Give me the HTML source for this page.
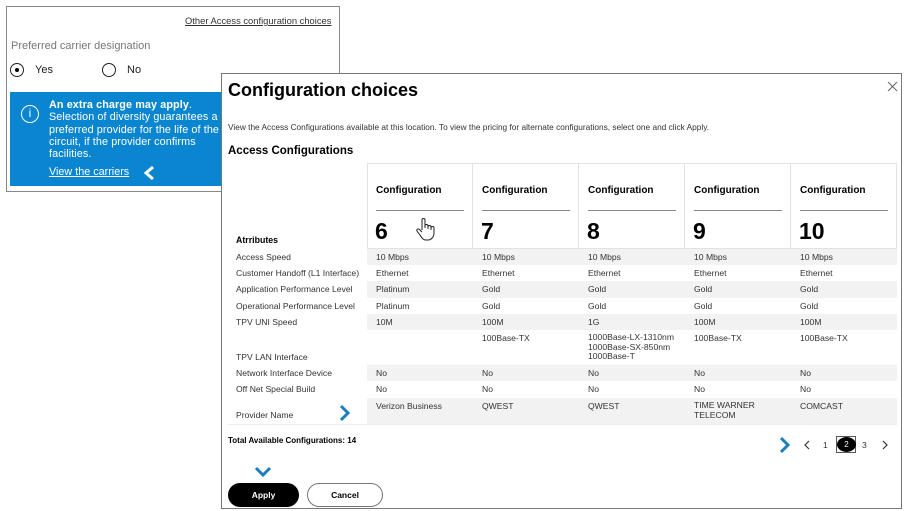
<!DOCTYPE html>
<html><head><meta charset="utf-8"><style>
*{margin:0;padding:0;box-sizing:border-box}
body{width:907px;height:511px;background:#fff;position:relative;overflow:hidden;font-family:"Liberation Sans",Arial,sans-serif;color:#000}
.a{position:absolute;white-space:nowrap}
.t{font-size:8.6px;color:#333}
.bold{font-weight:bold}
</style></head><body>
<div class="a" style="left:6px;top:6px;width:334px;height:186px;border:1px solid #888;background:#fff"></div>
<div class="a" style="left:185px;top:15px;font-size:9.4px;color:#333;text-decoration:underline">Other Access configuration choices</div>
<div class="a" style="left:11px;top:40px;font-size:11px;color:#777">Preferred carrier designation</div>
<div class="a" style="left:10px;top:63px;width:14px;height:14px;border:1.3px solid #222;border-radius:50%"></div>
<div class="a" style="left:15px;top:68px;width:4px;height:4px;background:#000;border-radius:50%"></div>
<div class="a" style="left:35px;top:64px;font-size:11px;color:#222">Yes</div>
<div class="a" style="left:102px;top:63px;width:14px;height:14px;border:1.3px solid #222;border-radius:50%"></div>
<div class="a" style="left:127px;top:64px;font-size:11px;color:#222">No</div>
<div class="a" style="left:10px;top:92px;width:212px;height:94px;background:#0a86d0"></div>
<div class="a" style="left:21px;top:105px;width:18px;height:18px;border:1.5px solid #fff;border-radius:50%;color:#fff;font-size:12px;text-align:center;line-height:15px">i</div>
<div class="a" style="left:49px;top:99px;font-size:10.8px;line-height:12.3px;color:#fff;white-space:normal;width:175px;letter-spacing:0.1px"><b>An extra charge may apply</b>.<br>Selection of diversity guarantees a preferred provider for the life of the circuit, if the provider confirms facilities.</div>
<div class="a" style="left:49px;top:166px;font-size:10.8px;color:#fff;text-decoration:underline">View the carriers</div>
<svg class="a" style="left:142px;top:165px" width="14" height="16"><path d="M11 2 L4 8 L11 14" stroke="#fff" stroke-width="3" fill="none"/></svg>

<div class="a" style="left:221px;top:73px;width:681px;height:436px;border:1px solid #777;background:#fff"></div>
<div class="a bold" style="left:228px;top:80px;font-size:18px">Configuration choices</div>
<svg class="a" style="left:887px;top:81px" width="11" height="11"><path d="M1 1L10 10M10 1L1 10" stroke="#666" stroke-width="1"/></svg>
<div class="a" style="left:228px;top:122px;font-size:8.3px;color:#333">View the Access Configurations available at this location. To view the pricing for alternate configurations, select one and click Apply.</div>
<div class="a bold" style="left:228px;top:145px;font-size:11.5px">Access Configurations</div>

<div class="a" style="left:367px;top:249px;width:530px;height:16px;background:#f2f2f2"></div>
<div class="a" style="left:367px;top:281px;width:530px;height:17px;background:#f2f2f2"></div>
<div class="a" style="left:367px;top:314px;width:530px;height:16px;background:#f2f2f2"></div>
<div class="a" style="left:367px;top:365px;width:530px;height:16px;background:#f2f2f2"></div>
<div class="a" style="left:367px;top:398px;width:530px;height:26px;background:#f2f2f2"></div>
<div class="a" style="left:228px;top:424px;width:669px;height:1px;background:#eee"></div>

<div class="a" style="left:367px;top:163px;width:106px;height:86px;border:1px solid #e2e2e2"></div>
<div class="a" style="left:473px;top:163px;width:106px;height:86px;border:1px solid #e2e2e2;border-left:none"></div>
<div class="a" style="left:579px;top:163px;width:106px;height:86px;border:1px solid #e2e2e2;border-left:none"></div>
<div class="a" style="left:685px;top:163px;width:106px;height:86px;border:1px solid #e2e2e2;border-left:none"></div>
<div class="a" style="left:791px;top:163px;width:106px;height:86px;border:1px solid #e2e2e2;border-left:none"></div>

<div class="a bold" style="left:376px;top:185px;font-size:10px">Configuration</div>
<div class="a bold" style="left:482px;top:185px;font-size:10px">Configuration</div>
<div class="a bold" style="left:588px;top:185px;font-size:10px">Configuration</div>
<div class="a bold" style="left:694px;top:185px;font-size:10px">Configuration</div>
<div class="a bold" style="left:800px;top:185px;font-size:10px">Configuration</div>
<div class="a" style="left:376px;top:210px;width:88px;height:1px;background:#888"></div>
<div class="a" style="left:482px;top:210px;width:88px;height:1px;background:#888"></div>
<div class="a" style="left:588px;top:210px;width:88px;height:1px;background:#888"></div>
<div class="a" style="left:694px;top:210px;width:88px;height:1px;background:#888"></div>
<div class="a" style="left:800px;top:210px;width:88px;height:1px;background:#888"></div>
<div class="a bold" style="left:375px;top:218px;font-size:23px">6</div>
<div class="a bold" style="left:481px;top:218px;font-size:23px">7</div>
<div class="a bold" style="left:587px;top:218px;font-size:23px">8</div>
<div class="a bold" style="left:693px;top:218px;font-size:23px">9</div>
<div class="a bold" style="left:799px;top:218px;font-size:23px">10</div>
<svg class="a" style="left:415px;top:217px" width="20" height="24" viewBox="0 0 20 24"><path d="M7 13V3a1.5 1.5 0 0 1 3 0v8 M10 9a1.5 1.5 0 0 1 3 0v3 M13 10a1.5 1.5 0 0 1 3 0v3 M16 11a1.5 1.5 0 0 1 3 0v5c0 4-3 7-6 7h-2c-3 0-4-2-6-5l-3-4c-1-1.5 1-3 2.5-1.5L7 15" fill="#fff" stroke="#222" stroke-width="1"/></svg>

<div class="a bold" style="left:236px;top:235px;font-size:8.8px">Atrributes</div>
<div class="a t" style="left:236px;top:252px">Access Speed</div>
<div class="a t" style="left:236px;top:268px">Customer Handoff (L1 Interface)</div>
<div class="a t" style="left:236px;top:284px">Application Performance Level</div>
<div class="a t" style="left:236px;top:301px">Operational Performance Level</div>
<div class="a t" style="left:236px;top:317px">TPV UNI Speed</div>
<div class="a t" style="left:236px;top:352px">TPV LAN Interface</div>
<div class="a t" style="left:236px;top:368px">Network Interface Device</div>
<div class="a t" style="left:236px;top:384px">Off Net Special Build</div>
<div class="a t" style="left:236px;top:410px">Provider Name</div>
<svg class="a" style="left:338px;top:404px" width="14" height="18"><path d="M3 2L10 9L3 16" stroke="#1a7fc0" stroke-width="3" fill="none"/></svg>

<div class="a t" style="left:376px;top:252px">10 Mbps</div>
<div class="a t" style="left:482px;top:252px">10 Mbps</div>
<div class="a t" style="left:588px;top:252px">10 Mbps</div>
<div class="a t" style="left:694px;top:252px">10 Mbps</div>
<div class="a t" style="left:800px;top:252px">10 Mbps</div>
<div class="a t" style="left:376px;top:268px">Ethernet</div>
<div class="a t" style="left:482px;top:268px">Ethernet</div>
<div class="a t" style="left:588px;top:268px">Ethernet</div>
<div class="a t" style="left:694px;top:268px">Ethernet</div>
<div class="a t" style="left:800px;top:268px">Ethernet</div>
<div class="a t" style="left:376px;top:284px">Platinum</div>
<div class="a t" style="left:482px;top:284px">Gold</div>
<div class="a t" style="left:588px;top:284px">Gold</div>
<div class="a t" style="left:694px;top:284px">Gold</div>
<div class="a t" style="left:800px;top:284px">Gold</div>
<div class="a t" style="left:376px;top:301px">Platinum</div>
<div class="a t" style="left:482px;top:301px">Gold</div>
<div class="a t" style="left:588px;top:301px">Gold</div>
<div class="a t" style="left:694px;top:301px">Gold</div>
<div class="a t" style="left:800px;top:301px">Gold</div>
<div class="a t" style="left:376px;top:317px">10M</div>
<div class="a t" style="left:482px;top:317px">100M</div>
<div class="a t" style="left:588px;top:317px">1G</div>
<div class="a t" style="left:694px;top:317px">100M</div>
<div class="a t" style="left:800px;top:317px">100M</div>
<div class="a t" style="left:482px;top:333px">100Base-TX</div>
<div class="a t" style="left:588px;top:333px;line-height:9.5px">1000Base-LX-1310nm<br>1000Base-SX-850nm<br>1000Base-T</div>
<div class="a t" style="left:694px;top:333px">100Base-TX</div>
<div class="a t" style="left:800px;top:333px">100Base-TX</div>
<div class="a t" style="left:376px;top:368px">No</div>
<div class="a t" style="left:482px;top:368px">No</div>
<div class="a t" style="left:588px;top:368px">No</div>
<div class="a t" style="left:694px;top:368px">No</div>
<div class="a t" style="left:800px;top:368px">No</div>
<div class="a t" style="left:376px;top:384px">No</div>
<div class="a t" style="left:482px;top:384px">No</div>
<div class="a t" style="left:588px;top:384px">No</div>
<div class="a t" style="left:694px;top:384px">No</div>
<div class="a t" style="left:800px;top:384px">No</div>
<div class="a t" style="left:376px;top:401px">Verizon Business</div>
<div class="a t" style="left:482px;top:401px">QWEST</div>
<div class="a t" style="left:588px;top:401px">QWEST</div>
<div class="a t" style="left:694px;top:401px;line-height:9.5px">TIME WARNER<br>TELECOM</div>
<div class="a t" style="left:800px;top:401px">COMCAST</div>

<div class="a bold" style="left:228px;top:436px;font-size:8px">Total Available Configurations: 14</div>

<svg class="a" style="left:778px;top:436px" width="14" height="18"><path d="M3 2L10 9L3 16" stroke="#1a7fc0" stroke-width="3" fill="none"/></svg>
<svg class="a" style="left:803px;top:440px" width="8" height="10"><path d="M6 1L2 5L6 9" stroke="#333" stroke-width="1.2" fill="none"/></svg>
<div class="a" style="left:823px;top:440px;font-size:8.5px;color:#333">1</div>
<div class="a" style="left:836px;top:436px;width:20px;height:17px;border:1px solid #555"></div>
<div class="a" style="left:837px;top:437px;width:19px;height:15px;background:#000;border-radius:50%;color:#fff;font-size:8px;text-align:center;line-height:15px">2</div>
<div class="a" style="left:862px;top:440px;font-size:8.5px;color:#333">3</div>
<svg class="a" style="left:881px;top:440px" width="8" height="10"><path d="M2 1L6 5L2 9" stroke="#333" stroke-width="1.2" fill="none"/></svg>

<svg class="a" style="left:254px;top:466px" width="18" height="12"><path d="M2 2L9 9L16 2" stroke="#1a7fc0" stroke-width="3" fill="none"/></svg>
<div class="a bold" style="left:228px;top:483px;width:71px;height:24px;background:#000;border-radius:12px;color:#fff;font-size:8.5px;text-align:center;line-height:24px">Apply</div>
<div class="a bold" style="left:307px;top:483px;width:76px;height:24px;border:1px solid #777;border-radius:12px;font-size:8.5px;text-align:center;line-height:22px">Cancel</div>
</body></html>
